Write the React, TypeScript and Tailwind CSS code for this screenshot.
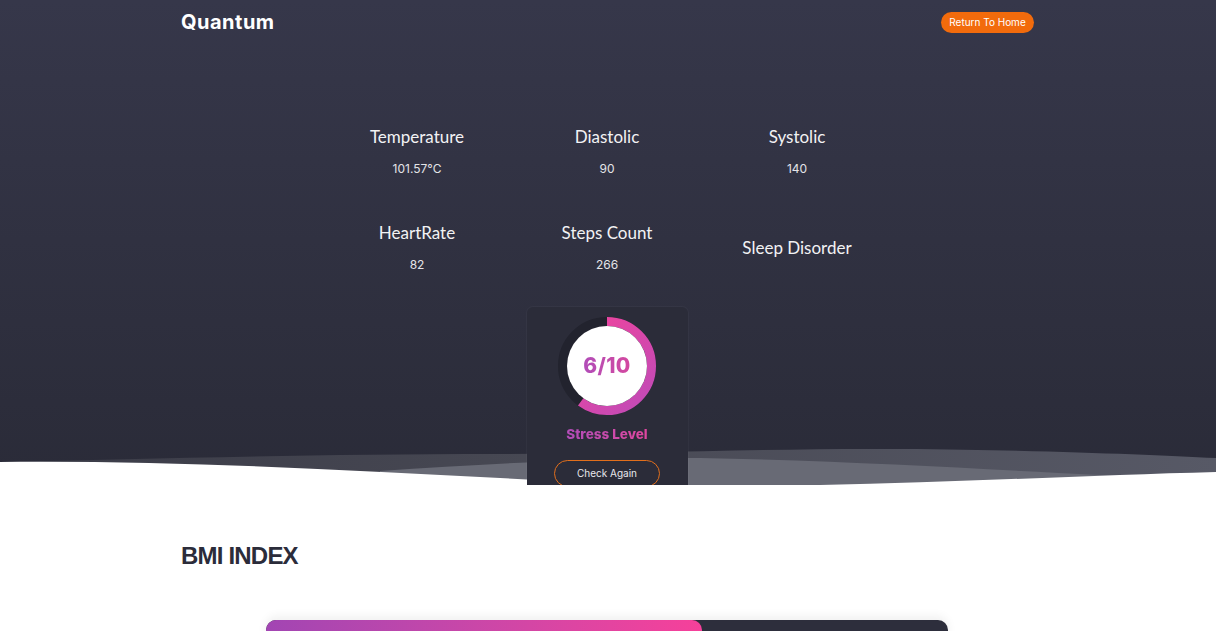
import React from "react";

const stats = [
  { label: "Temperature", value: "101.57°C" },
  { label: "Diastolic", value: "90" },
  { label: "Systolic", value: "140" },
  { label: "HeartRate", value: "82" },
  { label: "Steps Count", value: "266" },
  { label: "Sleep Disorder", value: "" },
];

const StressRing = ({ score }: { score: number }) => {
  const r = 44.5;
  const c = 2 * Math.PI * r;
  return (
    <div className="relative mx-auto h-[100px] w-[100px]">
      <svg width="100" height="100" viewBox="0 0 100 100" className="-rotate-90">
        <defs>
          <linearGradient id="ring" x1="1" y1="0" x2="0" y2="1">
            <stop offset="0%" stopColor="#f5439a" />
            <stop offset="100%" stopColor="#bf4bb8" />
          </linearGradient>
        </defs>
        <circle cx="50" cy="50" r={r} fill="none" stroke="#22232e" strokeWidth="9" />
        <circle
          cx="50"
          cy="50"
          r={r}
          fill="none"
          stroke="url(#ring)"
          strokeWidth="9"
          strokeDasharray={`${(score / 10) * c} ${c}`}
        />
        <circle cx="50" cy="50" r="40" fill="#ffffff" />
      </svg>
      <div className="absolute inset-0 flex items-center justify-center">
        <span className="bg-gradient-to-r from-[#b14cb8] to-[#d4489f] bg-clip-text font-['Inter'] text-[21px] font-extrabold tracking-[0.3px] text-transparent">
          {score}/10
        </span>
      </div>
    </div>
  );
};

const Waves = () => (
  <svg
    className="absolute bottom-0 left-0 h-[50px] w-full"
    viewBox="0 0 1216 50"
    preserveAspectRatio="none"
  >
    <defs>
      <linearGradient id="waveA" x1="0" y1="0" x2="1" y2="0">
        <stop offset="0%" stopColor="#3a3b47" />
        <stop offset="40%" stopColor="#464752" />
        <stop offset="100%" stopColor="#575966" />
      </linearGradient>
    </defs>
    <path
      d="M0,27 C150,24 300,19 500,19 C650,19 780,13 900,14 C1050,15 1150,20 1216,23 L1216,50 L0,50 Z"
      fill="url(#waveA)"
    />
    <path
      d="M380,36 C500,28 620,22 700,23 C850,26 980,34 1100,40 C1160,42 1200,40 1216,40 L1216,50 L380,50 Z"
      fill="#686a75"
    />
    <path
      d="M0,27 C220,25 420,40 640,50 L820,50 C960,47 1100,40 1216,37 L1216,50 L0,50 Z"
      fill="#ffffff"
    />
  </svg>
);

export default function App() {
  return (
    <div className="min-h-screen bg-white">
      <section className="relative h-[485px] overflow-hidden bg-gradient-to-b from-[#36374a] to-[#2a2b38]">
        <nav className="mx-auto flex h-[44px] w-[854px] items-center justify-between pr-px">
          <span className="font-['Inter'] text-[20px] font-bold tracking-[0.5px] text-white">
            Quantum
          </span>
          <button className="h-[21px] w-[93px] rounded-full bg-[#f26b0c] font-['Inter'] text-[10px] text-white">
            Return To Home
          </button>
        </nav>

        <div className="mx-auto mt-[82px] grid w-[572px] grid-cols-3 gap-y-[45px] pr-[2px]">
          {stats.map((s) => (
            <div key={s.label} className="flex h-[51px] flex-col items-center justify-center gap-[13px]">
              <span className="font-['Lato'] text-[17px] leading-[22px] text-[#f2f2f4]">{s.label}</span>
              {s.value && (
                <span className="font-['Inter'] text-[12px] leading-[16px] text-[#e4e4e8]">{s.value}</span>
              )}
            </div>
          ))}
        </div>

        <div className="relative z-10 mx-auto mt-[34px] w-[161px] -translate-x-px rounded-md bg-[#2b2c39] pt-[9px] pb-6 shadow-[0_0_0_1px_rgba(255,255,255,0.03)]">
          <StressRing score={6} />
          <p className="mt-[9px] text-center font-['Inter'] text-[13.5px] leading-[18px] font-extrabold">
            <span className="bg-gradient-to-r from-[#b14cb8] to-[#e0469f] bg-clip-text text-transparent">
              Stress Level
            </span>
          </p>
          <div className="mt-[17px] flex justify-center">
            <button className="h-[27px] w-[106px] rounded-full border-[1.5px] border-[#e26f1c] font-['Inter'] text-[10px] text-[#e8e8ec]">
              Check Again
            </button>
          </div>
        </div>

        <Waves />
      </section>

      <section className="pt-[57px]">
        <h2 className="mx-auto w-[854px] font-['Liberation_Sans'] text-[24px] leading-[28px] font-bold tracking-[-0.8px] text-[#2b2c3a]">
          BMI INDEX
        </h2>
        <div className="mx-auto mt-[50px] h-[40px] w-[682px] -translate-x-px overflow-hidden rounded-[10px] bg-[#2d2e3c] shadow-[0_-4px_10px_rgba(0,0,0,0.06)]">
          <div className="h-full w-[64%] rounded-r-[10px] bg-gradient-to-r from-[#a245b3] to-[#f6409a]" />
        </div>
      </section>
    </div>
  );
}
